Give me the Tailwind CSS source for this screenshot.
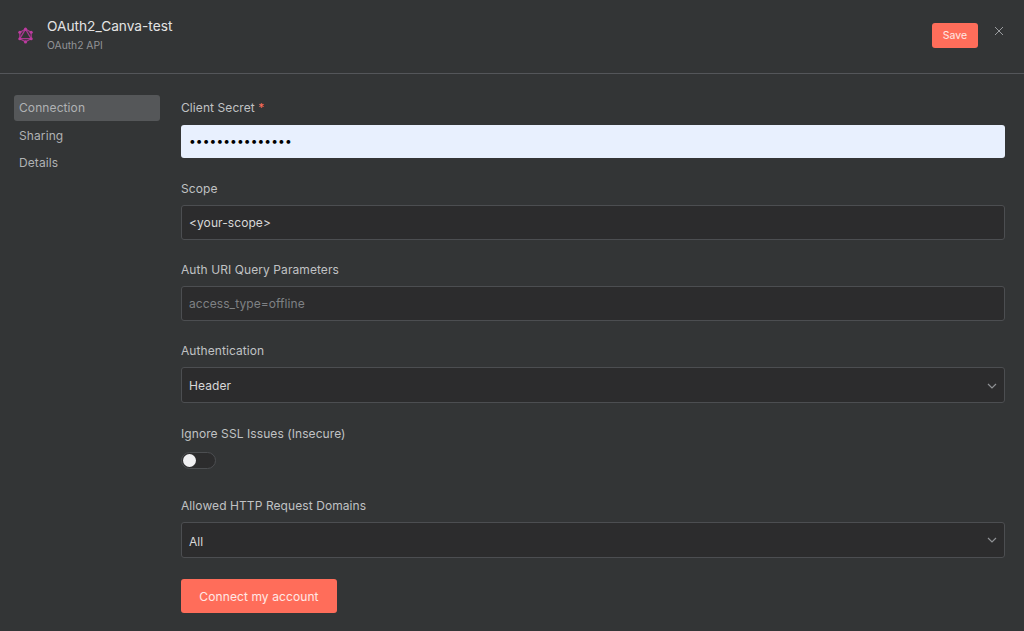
<!DOCTYPE html>
<html lang="en">
<head>
    <meta charset="UTF-8">
    <title>OAuth2_Canva-test</title>
    <script src="https://cdn.jsdelivr.net/npm/@tailwindcss/browser@4"></script>
</head>
<body class="bg-[#333536] text-[#c9c9c9] font-['Inter',sans-serif] h-[631px] w-[1024px] overflow-hidden">
    <!-- Header -->
    <header class="h-[74px] border-b border-[#54565a] flex justify-between pl-[17px] pr-[20px]">
        <div class="flex items-center gap-[13px] h-[70px]">
            <svg class="w-[17px] h-[17px]" viewBox="0 0 24 24" fill="none" stroke="#a8388f" stroke-width="1.8">
                <path d="M12 3 L20 7.5 V16.5 L12 21 L4 16.5 V7.5 Z" />
                <path d="M12 3 L20 16.5 H4 Z" />
                <g fill="#bd3ca0" stroke="none">
                    <circle cx="12" cy="3" r="2.2" /><circle cx="20" cy="7.5" r="2.2" /><circle cx="20" cy="16.5" r="2.2" />
                    <circle cx="12" cy="21" r="2.2" /><circle cx="4" cy="16.5" r="2.2" /><circle cx="4" cy="7.5" r="2.2" />
                </g>
            </svg>
            <div>
                <div class="text-[13.7px] leading-[18px] text-[#e4e4e4]">OAuth2_Canva-test</div>
                <div class="text-[10.3px] leading-[16px] mt-[2px] text-[#929497]">OAuth2 API</div>
            </div>
        </div>
        <div class="flex items-start gap-[16px] pt-[23px]">
            <button class="w-[46px] h-[25px] rounded-[3px] bg-[#ff6d5a] text-white/85 text-[10.5px]">Save</button>
            <svg class="w-[10px] h-[10px] mt-[3px]" viewBox="0 0 10 10" fill="none" stroke="#9a9c9f" stroke-width="1">
                <path d="M1 1 L9 9 M9 1 L1 9" />
            </svg>
        </div>
    </header>

    <div class="flex">
        <!-- Sidebar -->
        <nav class="w-[181px] pl-[14px] pt-[21px] text-[12px] tracking-[0.1px] text-[#b0b2b4] shrink-0">
            <a class="block w-[146px] h-[26px] leading-[26px] pl-[5px] rounded-[3px] bg-[#555759]">Connection</a>
            <a class="block h-[28px] leading-[30px] pl-[5px]">Sharing</a>
            <a class="block h-[27px] leading-[27px] pl-[5px]">Details</a>
        </nav>

        <!-- Form -->
        <main class="w-[824px] pt-[24px] text-[12px] tracking-[0.08px] text-[#c0c2c4]">
            <label class="block h-[18px] leading-[20px]">Client Secret <span class="text-[#ff6d5a]">*</span></label>
            <div class="mt-[9px] h-[33px] pb-[1px] rounded-[3px] bg-[#e8f0fe] pl-[8px] flex items-center text-black text-[12px] tracking-[0.1px]">•••••••••••••••</div>

            <label class="block mt-[21px] h-[18px] leading-[20px]">Scope</label>
            <div class="mt-[8px] h-[35px] rounded-[3px] bg-[#2c2c2d] border border-[#4c4e51] pl-[7px] flex items-center text-[#d8d8d8]">&lt;your-scope&gt;</div>

            <label class="block mt-[20px] h-[18px] leading-[20px]">Auth URI Query Parameters</label>
            <div class="mt-[8px] h-[35px] rounded-[3px] bg-[#2c2c2d] border border-[#4c4e51] pl-[7px] flex items-center text-[#7f8184]">access_type=offline</div>

            <label class="block mt-[20px] h-[18px] leading-[20px]">Authentication</label>
            <div class="mt-[8px] h-[36px] rounded-[3px] bg-[#2c2c2d] border border-[#4c4e51] pl-[7px] pr-[7px] pt-[1px] flex items-center justify-between text-[#d8d8d8]">
                <span>Header</span>
                <svg class="w-[10px] h-[6px]" viewBox="0 0 10 6" fill="none" stroke="#8f9194" stroke-width="1.2"><path d="M1 1 L5 5 L9 1" /></svg>
            </div>

            <label class="block mt-[21px] h-[18px] leading-[20px]">Ignore SSL Issues (Insecure)</label>
            <div class="mt-[10px] w-[35px] h-[17px] rounded-full bg-[#2c2c2d] border border-[#4c4e51] relative">
                <span class="absolute left-[1px] top-[1px] w-[13px] h-[13px] rounded-full bg-[#f0f0f2]"></span>
            </div>

            <label class="block mt-[27px] h-[18px] leading-[20px]">Allowed HTTP Request Domains</label>
            <div class="mt-[8px] h-[36px] rounded-[3px] bg-[#2c2c2d] border border-[#4c4e51] pl-[7px] pr-[7px] pt-[3px] flex items-center justify-between text-[#d8d8d8]">
                <span>All</span>
                <svg class="w-[10px] h-[6px] -mt-[3px]" viewBox="0 0 10 6" fill="none" stroke="#8f9194" stroke-width="1.2"><path d="M1 1 L5 5 L9 1" /></svg>
            </div>

            <button class="block mt-[21px] w-[156px] h-[34px] pt-[1px] rounded-[3px] bg-[#ff6d5a] text-white/85 text-[12px] tracking-[0.1px]">Connect my account</button>
        </main>
    </div>
</body>
</html>
